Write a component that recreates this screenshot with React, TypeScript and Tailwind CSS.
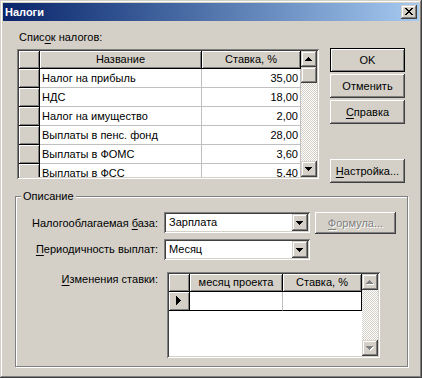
import React from "react";

const raisedBtn =
  "shadow-[inset_-1px_-1px_#404040,inset_1px_1px_#fff,inset_-2px_-2px_#808080,inset_2px_2px_#d4d0c8]";
const raisedSb =
  "shadow-[inset_-1px_-1px_#404040,inset_1px_1px_#d4d0c8,inset_-2px_-2px_#808080,inset_2px_2px_#fff]";
const sunken =
  "shadow-[inset_1px_1px_#808080,inset_-1px_-1px_#fff,inset_2px_2px_#404040,inset_-2px_-2px_#d4d0c8]";
const dither =
  "bg-[image:repeating-conic-gradient(#ffffff_0%_25%,#d4d0c8_0%_50%)] bg-[length:2px_2px]";

function Tri({ dir, disabled }: { dir: "up" | "down"; disabled?: boolean }) {
  const rows: [number, number][] = [
    [3, 1],
    [2, 3],
    [1, 5],
    [0, 7],
  ];
  const r = dir === "up" ? rows : [...rows].reverse();
  return (
    <svg width="8" height="5" viewBox="0 0 8 5" shapeRendering="crispEdges" className="block">
      {disabled &&
        r.map(([x, w], i) => (
          <rect key={"s" + i} x={x + 1} y={i + 1} width={w} height={1} fill="#fff" />
        ))}
      {r.map(([x, w], i) => (
        <rect key={i} x={x} y={i} width={w} height={1} fill={disabled ? "#808080" : "#000"} />
      ))}
    </svg>
  );
}

function SbBtn({ dir, disabled }: { dir: "up" | "down"; disabled?: boolean }) {
  return (
    <div
      className={`w-[16px] h-[16px] shrink-0 bg-[#d4d0c8] ${raisedSb} pl-[4px] ${
        dir === "up" ? "pt-[6px]" : "pt-[6px]"
      }`}
    >
      <Tri dir={dir} disabled={disabled} />
    </div>
  );
}

function Scrollbar({ thumb, disabled }: { thumb?: boolean; disabled?: boolean }) {
  return (
    <div className="w-[16px] h-full flex flex-col shrink-0">
      <SbBtn dir="up" disabled={disabled} />
      {thumb && <div className={`w-[16px] h-[16px] shrink-0 bg-[#d4d0c8] ${raisedSb}`} />}
      <div className={`flex-1 ${dither}`} />
      <SbBtn dir="down" disabled={disabled} />
    </div>
  );
}

function CloseBtn() {
  const rows: [number, number][][] = [
    [[0, 2], [6, 2]],
    [[1, 2], [5, 2]],
    [[2, 4]],
    [[3, 2]],
    [[2, 4]],
    [[1, 2], [5, 2]],
    [[0, 2], [6, 2]],
  ];
  return (
    <div className={`w-[16px] h-[14px] bg-[#d4d0c8] ${raisedSb} pl-[4px] pt-[3px]`}>
      <svg width="8" height="7" viewBox="0 0 8 7" shapeRendering="crispEdges" className="block">
        {rows.map((segs, y) =>
          segs.map(([x, w], j) => <rect key={y + "-" + j} x={x} y={y} width={w} height={1} fill="#000" />)
        )}
      </svg>
    </div>
  );
}

function Btn({
  children,
  def,
  disabled,
  w = "w-[75px]",
  h = "h-[24px]",
}: {
  children: React.ReactNode;
  def?: boolean;
  disabled?: boolean;
  w?: string;
  h?: string;
}) {
  return (
    <div
      className={`${w} ${h} shrink-0 bg-[#d4d0c8] flex items-center justify-center ${
        def ? "border border-black shadow-[inset_1px_1px_#fff,inset_-1px_-1px_#808080]" : raisedBtn
      } ${disabled ? "text-[#808080] [text-shadow:1px_1px_0_#fff]" : "text-black"}`}
    >
      <span>{children}</span>
    </div>
  );
}

function U({ children }: { children: React.ReactNode }) {
  return <span className="underline underline-offset-[2px]">{children}</span>;
}

function Combo({ text }: { text: string }) {
  return (
    <div className={`w-[146px] h-[21px] bg-white p-[2px] flex ${sunken}`}>
      <div className="flex-1 pl-[3px] flex items-center">{text}</div>
      <div className={`w-[16px] h-[17px] bg-[#d4d0c8] ${raisedSb} pl-[4px] pt-[7px]`}>
        <Tri dir="down" />
      </div>
    </div>
  );
}

const fixedCell =
  "bg-[#d4d0c8] border-r border-b border-black shadow-[inset_1px_1px_#fff,inset_-1px_-1px_#808080]";

const taxes: [string, string][] = [
  ["Налог на прибыль", "35,00"],
  ["НДС", "18,00"],
  ["Налог на имущество", "2,00"],
  ["Выплаты в пенс. фонд", "28,00"],
  ["Выплаты в ФОМС", "3,60"],
  ["Выплаты в ФСС", "5,40"],
];

function TaxGrid() {
  return (
    <div className={`w-[302px] h-[130px] p-[2px] bg-[#d4d0c8] ${sunken}`}>
      <div className="flex h-full">
        <div className="w-[282px] h-full overflow-hidden bg-white flex flex-col">
          <div className="flex h-[18px] shrink-0">
            <div className={`w-[21px] h-full shrink-0 ${fixedCell}`} />
            <div className={`w-[162px] h-full shrink-0 flex items-center justify-center ${fixedCell}`}>
              Название
            </div>
            <div className={`w-[99px] h-full shrink-0 flex items-center justify-center ${fixedCell}`}>
              Ставка, %
            </div>
          </div>
          {taxes.map(([n, v]) => (
            <div key={n} className="flex h-[19px] shrink-0">
              <div className={`w-[21px] h-full shrink-0 ${fixedCell}`} />
              <div className="w-[162px] h-full shrink-0 border-r border-b border-[#c0c0c0] pl-[2px] flex items-center">
                {n}
              </div>
              <div className="w-[99px] h-full shrink-0 border-r border-b border-[#c0c0c0] pr-[2px] flex items-center justify-end">
                {v}
              </div>
            </div>
          ))}
        </div>
        <Scrollbar thumb />
      </div>
    </div>
  );
}

function RateGrid() {
  return (
    <div className={`w-[213px] h-[86px] p-[2px] bg-[#d4d0c8] ${sunken}`}>
      <div className="flex h-full">
        <div className="w-[193px] h-full overflow-hidden bg-white flex flex-col">
          <div className="flex h-[18px] shrink-0">
            <div className={`w-[21px] h-full shrink-0 ${fixedCell}`} />
            <div className={`w-[93px] h-full shrink-0 flex items-center justify-center ${fixedCell}`}>
              месяц проекта
            </div>
            <div className={`w-[79px] h-full shrink-0 flex items-center justify-center ${fixedCell}`}>
              Ставка, %
            </div>
          </div>
          <div className="flex h-[19px] shrink-0">
            <div className={`w-[21px] h-full shrink-0 ${fixedCell} pl-[7px] pt-[4px]`}>
              <svg width="5" height="9" viewBox="0 0 5 9" shapeRendering="crispEdges" className="block">
                {[1, 2, 3, 4, 5, 4, 3, 2, 1].map((w, i) => (
                  <rect key={i} x={0} y={i} width={w} height={1} fill="#000" />
                ))}
              </svg>
            </div>
            <div className="w-[93px] h-full shrink-0 border-r border-[#c0c0c0] border-b border-b-black" />
            <div className="w-[79px] h-full shrink-0 border-r border-b border-black" />
          </div>
        </div>
        <Scrollbar disabled />
      </div>
    </div>
  );
}

export default function App() {
  return (
    <div className="w-[422px] h-[378px] bg-[#d4d0c8] p-[3px] flex flex-col font-['Liberation_Sans',Arial,sans-serif] text-[11px] leading-[13px] text-black select-none shadow-[inset_-1px_-1px_#404040,inset_1px_1px_#d4d0c8,inset_-2px_-2px_#808080,inset_2px_2px_#fff]">
      <div className="h-[18px] shrink-0 flex items-center justify-between bg-linear-to-r from-[#0a246a] to-[#a6caf0] pl-[2px] pr-[2px]">
        <span className="text-white font-bold">Налоги</span>
        <CloseBtn />
      </div>
      <div className="mt-[1px] flex-1 flex flex-col">
        <div className="flex mt-[8px] ml-[14px]">
          <div className="flex flex-col w-[302px]">
            <div className="h-[19px] pl-[2px] pt-[1px]">
              Спис<U>о</U>к налогов:
            </div>
            <TaxGrid />
          </div>
          <div className="ml-[11px] mt-[18px] flex flex-col">
            <Btn def>OK</Btn>
            <div className="h-[2px]" />
            <Btn>Отменить</Btn>
            <div className="h-[2px]" />
            <Btn>
              <U>С</U>правка
            </Btn>
            <div className="h-[35px]" />
            <Btn>
              <U>Н</U>астройка...
            </Btn>
          </div>
        </div>
        <div className="relative mt-[13px] ml-[12px] w-[393px] h-[171px] border border-[#808080] shadow-[inset_1px_1px_#fff,1px_1px_#fff]">
          <div className="absolute -top-[7px] left-[5px] px-[2px] bg-[#d4d0c8]">Описание</div>
          <div className="flex items-center mt-[15px] h-[22px]">
            <div className="w-[142px] text-right">
              Налогооблагаемая <U>б</U>аза:
            </div>
            <div className="ml-[6px] self-start">
              <Combo text="Зарплата" />
            </div>
            <div className="ml-[5px] self-start">
              <Btn disabled w="w-[81px]" h="h-[22px]">
                <U>Ф</U>ормула...
              </Btn>
            </div>
          </div>
          <div className="flex items-center mt-[5px]">
            <div className="w-[142px] text-right">
              <U>П</U>ериодичность выплат:
            </div>
            <div className="ml-[6px]">
              <Combo text="Месяц" />
            </div>
          </div>
          <div className="flex mt-[12px]">
            <div className="w-[142px] text-right pt-[1px]">
              <U>И</U>зменения ставки:
            </div>
            <div className="ml-[9px]">
              <RateGrid />
            </div>
          </div>
        </div>
      </div>
    </div>
  );
}
